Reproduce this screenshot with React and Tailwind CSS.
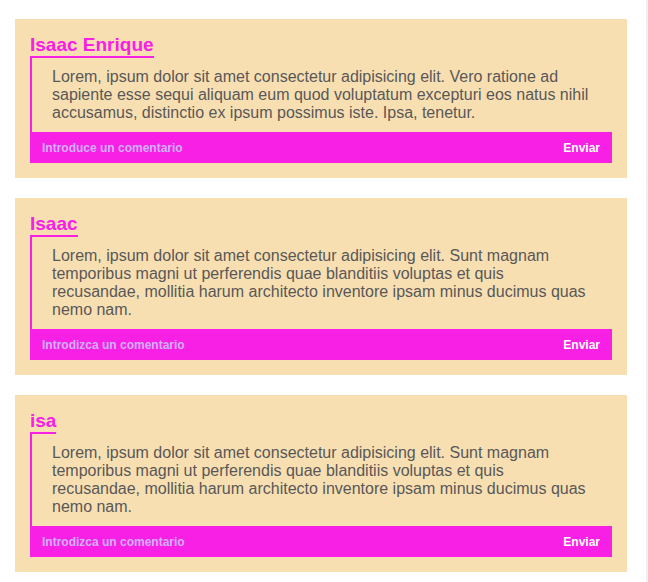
import React from "react";

const posts = [
  {
    name: "Isaac Enrique",
    text: "Lorem, ipsum dolor sit amet consectetur adipisicing elit. Vero ratione ad sapiente esse sequi aliquam eum quod voluptatum excepturi eos natus nihil accusamus, distinctio ex ipsum possimus iste. Ipsa, tenetur.",
    placeholder: "Introduce un comentario",
  },
  {
    name: "Isaac",
    text: "Lorem, ipsum dolor sit amet consectetur adipisicing elit. Sunt magnam temporibus magni ut perferendis quae blanditiis voluptas et quis recusandae, mollitia harum architecto inventore ipsam minus ducimus quas nemo nam.",
    placeholder: "Introdizca un comentario",
  },
  {
    name: "isa",
    text: "Lorem, ipsum dolor sit amet consectetur adipisicing elit. Sunt magnam temporibus magni ut perferendis quae blanditiis voluptas et quis recusandae, mollitia harum architecto inventore ipsam minus ducimus quas nemo nam.",
    placeholder: "Introdizca un comentario",
  },
];

function Post({ name, text, placeholder }) {
  return (
    <div className="bg-[#f8dfb2] p-[15px]">
      <div>
        <span className="inline-block border-b-2 border-[#f820e5] text-[19px] leading-[22px] font-bold text-[#f820e5]">
          {name}
        </span>
      </div>
      <p className="border-l-2 border-[#f820e5] py-[10px] pl-[20px] pr-[20px] text-[16px] leading-[18px] text-[#585858]">
        {text}
      </p>
      <div className="flex h-[31px] items-center justify-between bg-[#f820e5] px-[12px] text-[12px] font-bold">
        <span className="text-[#d2b0ff]">{placeholder}</span>
        <span className="text-white">Enviar</span>
      </div>
    </div>
  );
}

export default function App() {
  return (
    <div
      className="flex min-h-[582px] w-[648px] bg-white"
      style={{ fontFamily: '"Liberation Sans", Arial, sans-serif' }}
    >
      <div className="flex w-[646px] flex-col gap-[20px] pt-[19px] pl-[15px]">
        {posts.map((p, i) => (
          <div key={i} className="w-[612px]">
            <Post {...p} />
          </div>
        ))}
      </div>
      <div className="w-[2px] bg-[#f0f0f0]" />
    </div>
  );
}
